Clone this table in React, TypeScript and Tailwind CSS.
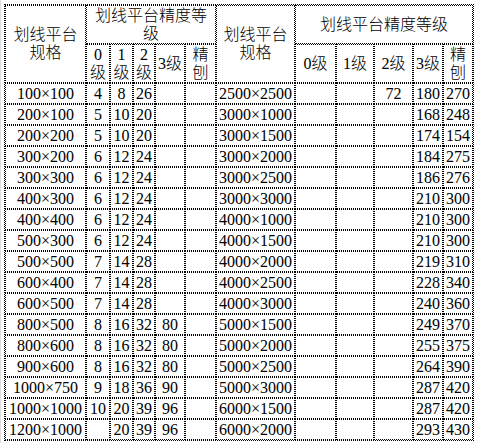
import React from 'react';

const leftRows: string[][] = [
  ['100×100', '4', '8', '26', '', ''],
  ['200×100', '5', '10', '20', '', ''],
  ['200×200', '5', '10', '20', '', ''],
  ['300×200', '6', '12', '24', '', ''],
  ['300×300', '6', '12', '24', '', ''],
  ['400×300', '6', '12', '24', '', ''],
  ['400×400', '6', '12', '24', '', ''],
  ['500×300', '6', '12', '24', '', ''],
  ['500×500', '7', '14', '28', '', ''],
  ['600×400', '7', '14', '28', '', ''],
  ['600×500', '7', '14', '28', '', ''],
  ['800×500', '8', '16', '32', '80', ''],
  ['800×600', '8', '16', '32', '80', ''],
  ['900×600', '8', '16', '32', '80', ''],
  ['1000×750', '9', '18', '36', '90', ''],
  ['1000×1000', '10', '20', '39', '96', ''],
  ['1200×1000', '', '20', '39', '96', ''],
];

const rightRows: string[][] = [
  ['2500×2500', '', '', '72', '180', '270'],
  ['3000×1000', '', '', '', '168', '248'],
  ['3000×1500', '', '', '', '174', '154'],
  ['3000×2000', '', '', '', '184', '275'],
  ['3000×2500', '', '', '', '186', '276'],
  ['3000×3000', '', '', '', '210', '300'],
  ['4000×1000', '', '', '', '210', '300'],
  ['4000×1500', '', '', '', '210', '300'],
  ['4000×2000', '', '', '', '219', '310'],
  ['4000×2500', '', '', '', '228', '340'],
  ['4000×3000', '', '', '', '240', '360'],
  ['5000×1500', '', '', '', '249', '370'],
  ['5000×2000', '', '', '', '255', '375'],
  ['5000×2500', '', '', '', '264', '390'],
  ['5000×3000', '', '', '', '287', '420'],
  ['6000×1500', '', '', '', '287', '420'],
  ['6000×2000', '', '', '', '293', '430'],
];

const cell = 'border border-dotted border-black p-0 text-center align-middle';
const head = `${cell} font-light`;

const App = () => {
  return (
    <div className="w-[481px] h-[443px] bg-white border-l border-[#dcdcdc] pl-[3px] pt-[4px] text-black font-['Liberation_Serif','Noto_Sans_CJK_SC',serif] text-[16px]">
      <table className="table-fixed w-[470px] border-separate border-spacing-0 border border-dotted border-black">
        <colgroup>
          <col className="w-[81px]" />
          <col className="w-[24px]" />
          <col className="w-[23px]" />
          <col className="w-[22px]" />
          <col className="w-[30px]" />
          <col className="w-[31px]" />
          <col className="w-[79px]" />
          <col className="w-[41px]" />
          <col className="w-[38px]" />
          <col className="w-[39px]" />
          <col className="w-[30px]" />
          <col className="w-[30px]" />
        </colgroup>
        <thead className="leading-[18px]">
          <tr className="h-[39px]">
            <th rowSpan={2} className={head}>
              划线平台
              <br />
              规格
            </th>
            <th colSpan={5} className={head}>
              划线平台精度等
              <br />
              级
            </th>
            <th rowSpan={2} className={head}>
              划线平台
              <br />
              规格
            </th>
            <th colSpan={5} className={head}>
              划线平台精度等级
            </th>
          </tr>
          <tr className="h-[39px]">
            <th className={head}>
              0
              <br />级
            </th>
            <th className={head}>
              1
              <br />级
            </th>
            <th className={head}>
              2
              <br />级
            </th>
            <th className={head}>3级</th>
            <th className={head}>
              精
              <br />刨
            </th>
            <th className={head}>0级</th>
            <th className={head}>1级</th>
            <th className={head}>2级</th>
            <th className={head}>3级</th>
            <th className={head}>
              精
              <br />刨
            </th>
          </tr>
        </thead>
        <tbody className="leading-[19px]">
          {leftRows.map((row, i) => (
            <tr key={i} className="h-[21px]">
              {row.map((v, j) => (
                <td key={`l${j}`} className={cell}>
                  {v}
                </td>
              ))}
              {rightRows[i].map((v, j) => (
                <td key={`r${j}`} className={cell}>
                  {v}
                </td>
              ))}
            </tr>
          ))}
        </tbody>
      </table>
      <div className="h-[1px] w-full" />
    </div>
  );
};

export default App;
